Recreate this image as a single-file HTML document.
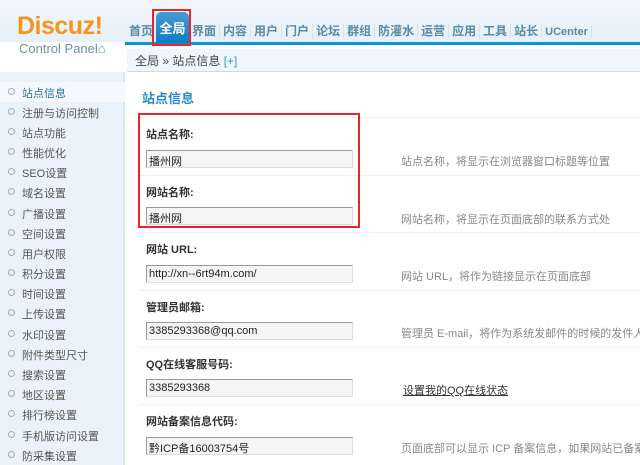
<!DOCTYPE html>
<html><head><meta charset="utf-8"><style>
*{margin:0;padding:0;box-sizing:border-box}
body{width:640px;height:465px;overflow:hidden;background:#fff;font-family:"Liberation Sans","Noto Sans CJK SC",sans-serif;font-size:12px;color:#333;position:relative}
.a{position:absolute}
#top{left:0;top:0;width:640px;height:42px;background:linear-gradient(#f2f7fc,#e6f0f9)}
#side{left:0;top:72px;width:125px;height:393px;background:#eaf3fb;border-right:2px solid #d6e6f3}
.logo{left:17px;top:12px;font:bold 25px "Liberation Sans",sans-serif;color:#f7941d;letter-spacing:-0.5px}
.cp{left:19px;top:41px;font-size:13px;color:#6e8fa5}
.nav{top:22px;font-size:12px;font-weight:bold;color:#5a8aa8;white-space:nowrap}
.nav span{padding:0 3px;border-right:1px solid #d5e3ee}
.tab{left:156px;top:12px;width:33px;height:31px;background:linear-gradient(#4a9ad4,#0e7dc2);border-radius:5px 5px 0 0;color:#fff;font-weight:bold;font-size:13px;text-align:center;line-height:34px}
.red{border:2px solid #e8242a}
.bar{left:125px;top:42px;width:515px;height:3px;background:#0a96d0}
.crumb{left:127px;top:49px;width:513px;height:23px;background:#f0f6fc;border-bottom:1px solid #c7dded;font-size:12px;color:#444;padding:3px 0 0 8px}
.si{left:8px;font-size:11px;color:#555}
.si:before{content:"";display:inline-block;width:5px;height:5px;border:1px solid #aaa;border-radius:50%;margin-right:7px;vertical-align:2px}
.lbl{left:146px;font-weight:bold;font-size:11px;color:#333}
.inp{left:146px;width:207px;height:18px;border:1px solid #999;border-right-color:#ddd;border-bottom-color:#ddd;background:#f5f5f5;font-size:11px;padding:2px 2px;color:#222}
.desc{left:401px;width:239px;overflow:hidden;color:#888;font-size:11px;white-space:nowrap}
.sep{left:140px;width:500px;border-top:1px dotted #dde8f2}
</style></head><body>
<div class="a" id="top"></div>
<div class="a logo">Discuz!</div>
<div class="a cp">Control Panel⌂</div>
<div class="a nav" style="left:126px"><span>首页</span></div>
<div class="a nav" style="left:189px"><span>界面</span><span>内容</span><span>用户</span><span>门户</span><span>论坛</span><span>群组</span><span>防灌水</span><span>运营</span><span>应用</span><span>工具</span><span>站长</span><span style="font-size:11px">UCenter</span></div>
<div class="a bar"></div>
<div class="a tab">全局</div>
<div class="a red" style="left:152px;top:9px;width:39px;height:37px"></div>
<div class="a crumb">全局 » 站点信息 <span style="color:#39c">[+]</span></div>
<div class="a" id="side"></div>
<div class="a" style="left:0;top:82px;width:125px;height:20px;background:#f5f9fd"></div>
<div class="a si" style="top:85px;color:#2b6ea6">站点信息</div>
<div class="a si" style="top:105px">注册与访问控制</div>
<div class="a si" style="top:125px">站点功能</div>
<div class="a si" style="top:145px">性能优化</div>
<div class="a si" style="top:165px">SEO设置</div>
<div class="a si" style="top:185px">域名设置</div>
<div class="a si" style="top:206px">广播设置</div>
<div class="a si" style="top:226px">空间设置</div>
<div class="a si" style="top:246px">用户权限</div>
<div class="a si" style="top:266px">积分设置</div>
<div class="a si" style="top:286px">时间设置</div>
<div class="a si" style="top:306px">上传设置</div>
<div class="a si" style="top:327px">水印设置</div>
<div class="a si" style="top:347px">附件类型尺寸</div>
<div class="a si" style="top:367px">搜索设置</div>
<div class="a si" style="top:387px">地区设置</div>
<div class="a si" style="top:407px">排行榜设置</div>
<div class="a si" style="top:428px">手机版访问设置</div>
<div class="a si" style="top:448px">防采集设置</div>
<div class="a" style="left:142px;top:88px;font-size:13px;font-weight:bold;color:#2b8acb">站点信息</div>
<div class="a sep" style="top:117px"></div>
<div class="a lbl" style="top:126px">站点名称:</div>
<div class="a inp" style="top:150px">播州网</div>
<div class="a desc" style="top:153px">站点名称，将显示在浏览器窗口标题等位置</div>
<div class="a sep" style="top:175px"></div>
<div class="a lbl" style="top:184px">网站名称:</div>
<div class="a inp" style="top:207px">播州网</div>
<div class="a desc" style="top:211px">网站名称，将显示在页面底部的联系方式处</div>
<div class="a sep" style="top:232px"></div>
<div class="a lbl" style="top:241px">网站 URL:</div>
<div class="a inp" style="top:265px">http://xn--6rt94m.com/</div>
<div class="a desc" style="top:268px">网站 URL，将作为链接显示在页面底部</div>
<div class="a sep" style="top:290px"></div>
<div class="a lbl" style="top:299px">管理员邮箱:</div>
<div class="a inp" style="top:322px">3385293368@qq.com</div>
<div class="a desc" style="top:325px">管理员 E-mail，将作为系统发邮件的时候的发件人地址</div>
<div class="a sep" style="top:347px"></div>
<div class="a lbl" style="top:356px">QQ在线客服号码:</div>
<div class="a inp" style="top:379px">3385293368</div>
<div class="a desc" style="top:382px;left:403px;color:#333;text-decoration:underline">设置我的QQ在线状态</div>
<div class="a sep" style="top:404px"></div>
<div class="a lbl" style="top:413px">网站备案信息代码:</div>
<div class="a inp" style="top:437px">黔ICP备16003754号</div>
<div class="a desc" style="top:440px">页面底部可以显示 ICP 备案信息，如果网站已备案，在此</div>
<div class="a red" style="left:138px;top:113px;width:222px;height:115px"></div>
</body></html>
